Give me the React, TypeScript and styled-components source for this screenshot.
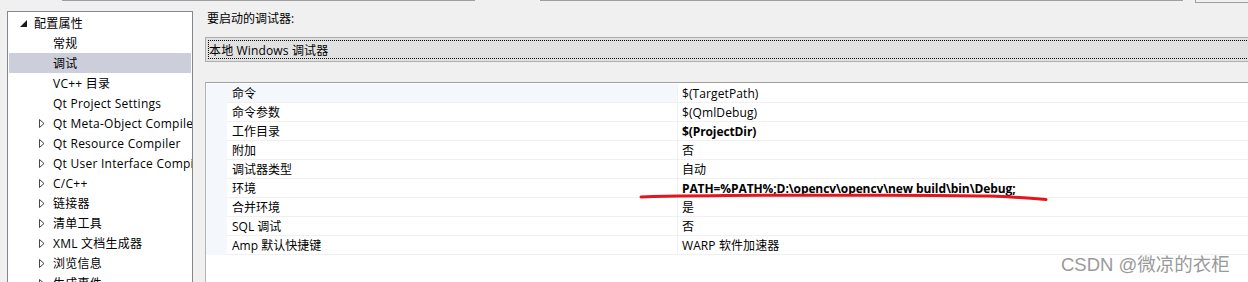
import React from "react";
import styled, { createGlobalStyle } from "styled-components";

const GlobalStyle = createGlobalStyle`
  body {
    margin: 0;
    background: #f0f0f0;
    font-family: "Open Sans", "Noto Sans CJK SC", sans-serif;
    font-size: 12px;
    color: #000;
  }
`;

const Page = styled.div`
  position: relative;
  width: 1248px;
  height: 282px;
  overflow: hidden;
  display: flex;
  flex-direction: column;
`;

const TopStrip = styled.div`
  display: flex;
  height: 3px;
  flex-shrink: 0;
`;

const Edge = styled.div<{ $from: number; $width?: number; $box?: boolean }>`
  margin-left: ${(p) => p.$from}px;
  ${(p) => (p.$width ? `width: ${p.$width}px;` : "flex: 1;")}
  ${(p) =>
    p.$box
      ? "border-left: 1px solid #a0a0a0; border-bottom: 1px solid #a0a0a0; height: 2px;"
      : "border-top: 1px solid #a0a0a0;"}
`;

const Body = styled.div`
  flex: 1;
  display: flex;
  min-height: 0;
`;

const TreePanel = styled.div`
  margin: 8px 0 0 7px;
  width: 186px;
  box-sizing: border-box;
  border: 1px solid #828790;
  border-bottom: none;
  background: #fff;
  padding: 1px;
  overflow: hidden;
`;

const TreeRow = styled.div<{ $level: number; $selected?: boolean }>`
  display: flex;
  align-items: center;
  height: 20px;
  padding-left: ${(p) => (p.$level === 0 ? 11 : 30)}px;
  background: ${(p) => (p.$selected ? "#cccedb" : "transparent")};
  white-space: nowrap;
  letter-spacing: 0.25px;
`;

const ArrowSlot = styled.span`
  width: 14px;
  flex-shrink: 0;
  display: flex;
  align-items: center;
`;

const RightColumn = styled.div`
  flex: 1;
  margin: 0 -12px 0 12px;
  display: flex;
  flex-direction: column;
`;

const Label = styled.div`
  margin: 6px 0 0 2px;
  line-height: 19px;
`;

const Combo = styled.div`
  margin-top: 9px;
  height: 25px;
  box-sizing: border-box;
  border: 1px solid #adadad;
  background: #e1e1e1;
  padding: 2px;
`;

const FocusRect = styled.div`
  height: 100%;
  box-sizing: border-box;
  border: 1px dotted #000;
  display: flex;
  align-items: center;
  padding-left: 0;
  letter-spacing: 0.15px;
`;

const Grid = styled.div`
  margin-top: 20px;
  flex: 1;
  border-top: 1px solid #a0a0a0;
  border-left: 1px solid #b4b4b4;
  background: #fff;
  padding-top: 1px;
`;

const PropRow = styled.div`
  display: grid;
  grid-template-columns: 21px 451px 1fr;
  height: 19px;
`;

const Gutter = styled.div`
  background: #f4f7fc;
`;

const NameCell = styled.div<{ $active?: boolean }>`
  background: ${(p) => (p.$active ? "#f4f7fc" : "#fff")};
  border-bottom: 1px solid #f0f0f0;
  border-right: 1px solid #f0f0f0;
  padding-left: 5px;
  display: flex;
  align-items: center;
  white-space: nowrap;
`;

const ValueCell = styled.div<{ $bold?: boolean }>`
  border-bottom: 1px solid #f0f0f0;
  padding-left: 4px;
  display: flex;
  align-items: center;
  white-space: nowrap;
  font-weight: ${(p) => (p.$bold ? 700 : 400)};
  letter-spacing: ${(p) => (p.$bold ? "-0.1px" : "0.1px")};
`;

const Underline = styled.svg`
  position: absolute;
  left: 636px;
  top: 188px;
`;

const Watermark = styled.div`
  position: absolute;
  left: 1061px;
  top: 250px;
  font-family: "Liberation Sans", "Noto Sans CJK SC", sans-serif;
  font-size: 18.5px;
  color: #9a9a9a;
  text-shadow: 0 0 2px #fff;
  white-space: nowrap;
`;

const Expanded = () => (
  <svg width="7" height="7" viewBox="0 0 7 7">
    <polygon points="0,7 7,7 7,0" fill="#1a1a1a" />
  </svg>
);

const Collapsed = () => (
  <svg width="6" height="9" viewBox="0 0 6 9">
    <polygon points="0.5,0.5 5,4.5 0.5,8.5" fill="none" stroke="#444" strokeWidth="1" />
  </svg>
);

const tree: { label: string; level: number; arrow?: "open" | "closed"; selected?: boolean }[] = [
  { label: "配置属性", level: 0, arrow: "open" },
  { label: "常规", level: 1 },
  { label: "调试", level: 1, selected: true },
  { label: "VC++ 目录", level: 1 },
  { label: "Qt Project Settings", level: 1 },
  { label: "Qt Meta-Object Compiler", level: 1, arrow: "closed" },
  { label: "Qt Resource Compiler", level: 1, arrow: "closed" },
  { label: "Qt User Interface Compiler", level: 1, arrow: "closed" },
  { label: "C/C++", level: 1, arrow: "closed" },
  { label: "链接器", level: 1, arrow: "closed" },
  { label: "清单工具", level: 1, arrow: "closed" },
  { label: "XML 文档生成器", level: 1, arrow: "closed" },
  { label: "浏览信息", level: 1, arrow: "closed" },
  { label: "生成事件", level: 1, arrow: "closed" },
];

const props: { name: string; value: string; bold?: boolean }[] = [
  { name: "命令", value: "$(TargetPath)" },
  { name: "命令参数", value: "$(QmlDebug)" },
  { name: "工作目录", value: "$(ProjectDir)", bold: true },
  { name: "附加", value: "否" },
  { name: "调试器类型", value: "自动" },
  { name: "环境", value: "PATH=%PATH%;D:\\opencv\\opencv\\new build\\bin\\Debug;", bold: true },
  { name: "合并环境", value: "是" },
  { name: "SQL 调试", value: "否" },
  { name: "Amp 默认快捷键", value: "WARP 软件加速器" },
];

export default function App() {
  return (
    <>
      <GlobalStyle />
      <Page>
        <TopStrip>
          <Edge $from={62} $width={413} />
          <Edge $from={65} $width={643} />
          <Edge $from={12} $box />
        </TopStrip>
        <Body>
          <TreePanel>
            {tree.map((t) => (
              <TreeRow key={t.label} $level={t.level} $selected={t.selected}>
                <ArrowSlot>
                  {t.arrow === "open" && <Expanded />}
                  {t.arrow === "closed" && <Collapsed />}
                </ArrowSlot>
                {t.label}
              </TreeRow>
            ))}
          </TreePanel>
          <RightColumn>
            <Label>要启动的调试器:</Label>
            <Combo>
              <FocusRect>本地 Windows 调试器</FocusRect>
            </Combo>
            <Grid>
              {props.map((p, i) => (
                <PropRow key={p.name}>
                  <Gutter />
                  <NameCell $active={i === 0}>{p.name}</NameCell>
                  <ValueCell $bold={p.bold}>{p.value}</ValueCell>
                </PropRow>
              ))}
            </Grid>
          </RightColumn>
        </Body>
        <Underline width="420" height="16" viewBox="0 0 420 16">
          <path
            d="M5 9 C 60 7.5, 150 7, 250 7.2 S 370 8, 410 11.5"
            fill="none"
            stroke="#e3161d"
            strokeWidth="3"
            strokeLinecap="round"
          />
        </Underline>
        <Watermark>CSDN @微凉的衣柜</Watermark>
      </Page>
    </>
  );
}
